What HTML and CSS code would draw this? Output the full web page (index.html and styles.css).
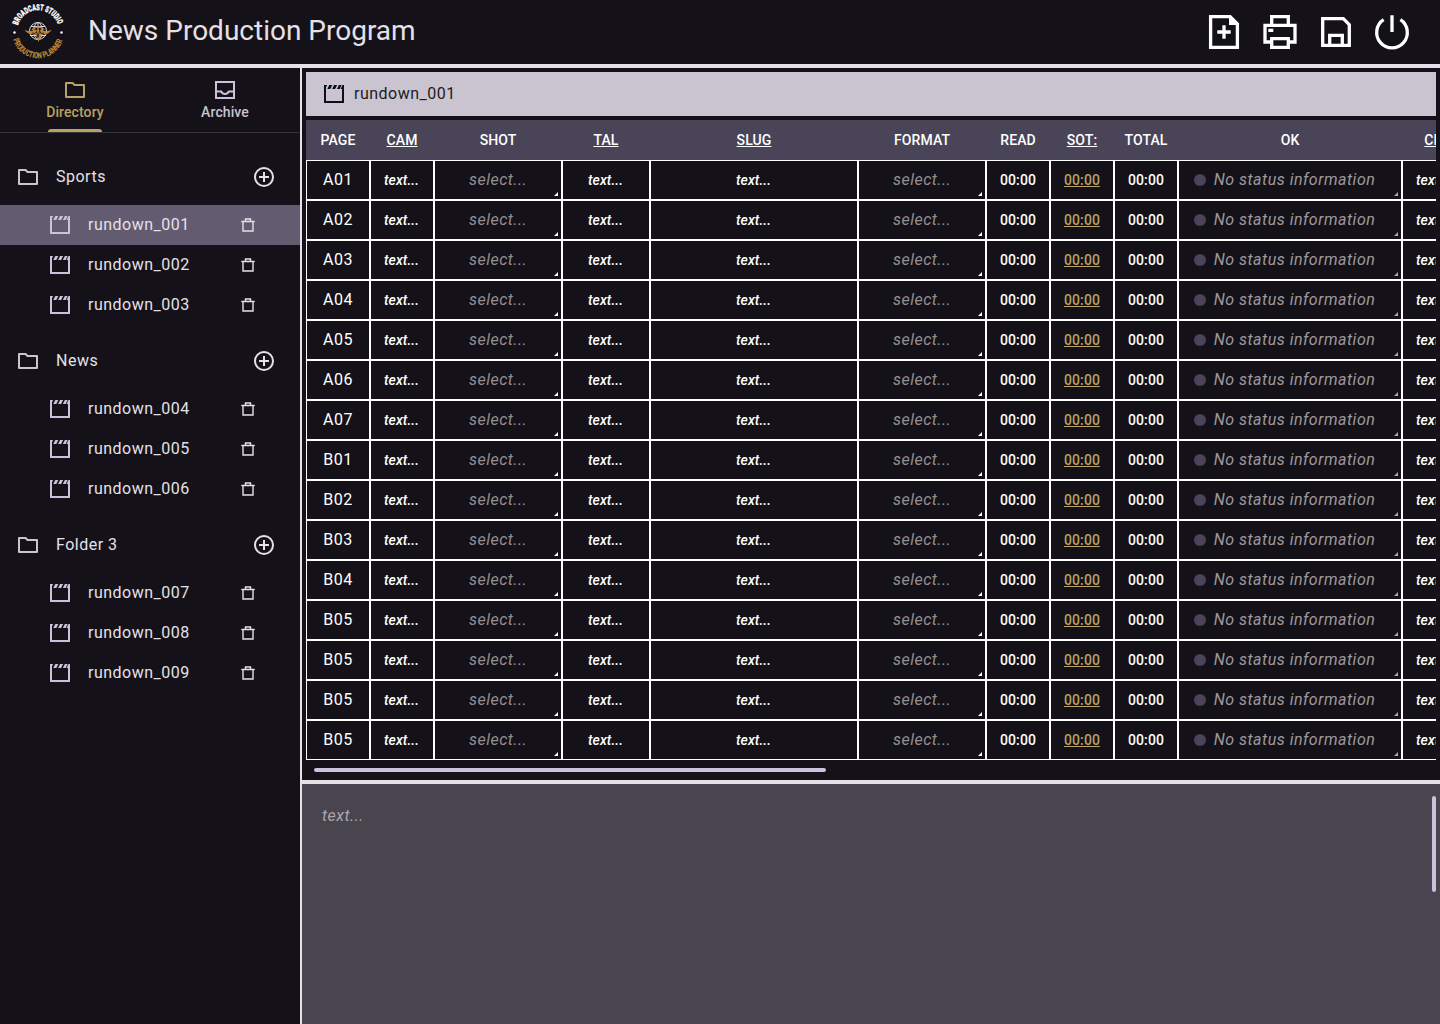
FILE: index.html
```html
<!DOCTYPE html>
<html lang="en">
<head>
<meta charset="utf-8">
<title>News Production Program</title>
<link rel="stylesheet" href="styles.css">
</head>
<body>
<svg class="defs" aria-hidden="true">
  <symbol id="folder" viewBox="0 0 24 24"><path d="M3 19V5h6.6l2 2H21v12z" fill="none" stroke="currentColor" stroke-width="2" stroke-linejoin="round"/></symbol>
  <symbol id="inbox" viewBox="0 0 24 24"><path d="M3 4h18v16H3zM3 13.5h5.2c.8 1.6 2.2 2.5 3.8 2.5s3-.9 3.800-2.500H21" fill="none" stroke="currentColor" stroke-width="2"/></symbol>
  <symbol id="clapper" viewBox="0 0 24 24"><path d="M2 3h3L4 5.500V19h16V7h-1.500L20.500 3H22v18H2zM7.300 3h3L8.300 7h-3zM12.100 3h3l-2 4h-3zM16.900 3h2.700l-2 4h-2.700z" fill="currentColor"/></symbol>
  <symbol id="trash" viewBox="0 0 16 16"><path d="M1.300 4.500h13.400M5.500 4V2h5v2M3 4.500v9.500h10V4.500" fill="none" stroke="currentColor" stroke-width="1.400"/></symbol>
  <symbol id="add" viewBox="0 0 24 24"><path d="M12 3a9 9 0 1 0 0 18a9 9 0 0 0 0-18zM12 7v10M7 12h10" fill="none" stroke="currentColor" stroke-width="2"/></symbol>
</svg>
<header class="topbar">
  <svg class="logo" viewBox="0 0 56 56">
    <path id="arc-top" d="M7.800 21.500A21 21 0 0 1 48.200 21.500" fill="none"/>
    <path id="arc-bottom" d="M3 35.500A26 26 0 0 0 53 35.500" fill="none"/>
    <text class="logo-top"><textPath href="#arc-top" textLength="53" lengthAdjust="spacingAndGlyphs">BROADCAST STUDIO</textPath></text>
    <text class="logo-bottom"><textPath href="#arc-bottom" textLength="66" lengthAdjust="spacingAndGlyphs">PRODUCTION PLANNER</textPath></text>
    <g fill="none" stroke="#d8d6da" stroke-width="1"><circle cx="28" cy="27" r="8.500"/><ellipse cx="28" cy="27" rx="4.300" ry="8.500"/><path d="M28 18.500v17M21 22.500h14M20 31.500h16"/></g>
    <path d="M14.500 26q6 2.500 10-.5l3 1 4-1q4 3 10 .5-3 5-8.500 4l-2 1.500-2.500 6.500-2.500-6.500-2-1.500q-6 1-9.500-4z" fill="#bd8235"/>
    <path d="M22 25.500q6-5 12 0" fill="none" stroke="#bd8235" stroke-width="1.600"/>
    <path d="M22 29l3 .5 1.500-2 1.500 6 1.500-7 1.500 3 3-.5" fill="none" stroke="#141218" stroke-width=".8"/>
    <circle cx="4.500" cy="28.500" r="1.200" fill="#fff"/><circle cx="51.500" cy="28.500" r="1.200" fill="#fff"/>
  </svg>
  <h1>News Production Program</h1>
  <nav class="actions">
    <svg viewBox="0 0 40 40"><path d="M6.600 4.600h19.500l7.300 7.300v23.500H6.600z"/><path class="solid" d="M25 3v10h10z"/><path d="M20 13.300v13.400M13.300 20h13.400"/></svg>
    <svg viewBox="0 0 40 40"><path d="M11.700 13V4.700h16.600V13M11.700 30H5V13.300h30V30h-6.700M11.700 26.700h16.600v8.600H11.700z"/><path class="solid" d="M8.300 16.700h5V20h-5z"/></svg>
    <svg viewBox="0 0 40 40"><path d="M6.700 6.700h20.600l6 6v20.600H6.700z"/><path d="M13.700 33V23.300h12.600V33"/></svg>
    <svg viewBox="0 0 40 40"><path d="M20 3.300V20M11.600 7.700a15.300 15.300 0 1 0 16.800 0"/></svg>
  </nav>
</header>
<div class="workspace">
  <aside class="sidebar">
    <div class="tabs">
      <div class="tab active"><svg class="icon"><use href="#folder"/></svg><span>Directory</span></div>
      <div class="tab"><svg class="icon"><use href="#inbox"/></svg><span>Archive</span></div>
    </div>
    <div class="folders" id="folders"></div>
  </aside>
  <main class="main">
    <section class="rundown">
      <div class="rundown-title"><svg class="icon"><use href="#clapper"/></svg><span>rundown_001</span></div>
      <div class="sheet">
        <div class="row head">
          <span>PAGE</span><u>CAM</u><span>SHOT</span><u>TAL</u><u>SLUG</u><span>FORMAT</span><span>READ</span><u>SOT:</u><span>TOTAL</span><span>OK</span><u>CH</u>
        </div>
        <div id="rows"></div>
      </div>
      <div class="hscroll"></div>
    </section>
    <section class="notes"><p>text...</p><div class="vscroll"></div></section>
  </main>
</div>
<script src="app.js"></script>
</body>
</html>
```
FILE: styles.css
```css
* { box-sizing: border-box; }
body {
  margin: 0;
  height: 1024px;
  display: flex;
  flex-direction: column;
  overflow: hidden;
  background: #141218;
  color: #e6e0e9;
  font: 16px/24px Roboto, sans-serif;
  letter-spacing: .5px;
}
.defs { display: none; }
.icon { width: 24px; height: 24px; display: block; flex: none; }

.topbar {
  flex: none;
  height: 68px;
  display: flex;
  align-items: center;
  padding: 0 28px 0 10px;
  border-bottom: 4px solid #e6e0e9;
}
.logo { width: 56px; height: 56px; flex: none; overflow: visible; }
.logo text { font: 900 8.5px Roboto, sans-serif; letter-spacing: 0; }
.logo .logo-top { fill: #fff; stroke: #fff; stroke-width: .3; }
.logo .logo-bottom { fill: #bd8235; }
h1 { margin: 0 auto 3px 22px; font-size: 28px; line-height: 36px; font-weight: 400; letter-spacing: 0; }
.actions { display: flex; gap: 16px; }
.actions svg { width: 40px; height: 40px; fill: none; stroke: #fff; stroke-width: 3.300; }
.actions .solid { fill: #fff; stroke: none; }

.workspace { flex: 1; display: flex; min-height: 0; }
.sidebar { width: 302px; flex: none; border-right: 2px solid #e6e0e9; }
.tabs { display: flex; height: 65px; border-bottom: 1px solid #36343b; }
.tab {
  flex: 1;
  display: flex;
  flex-direction: column;
  align-items: center;
  padding-top: 10px;
  font-size: 14px;
  line-height: 20px;
  font-weight: 500;
  letter-spacing: .1px;
  color: #cac4d0;
}
.tab:not(.active) .icon { color: #ccc2dc; }
.tab.active { color: #b7a163; }
.tab.active::after { content: ""; width: 54px; height: 3px; margin-top: 7px; border-radius: 3px 3px 0 0; background: #b7a163; }
.folders { padding-top: 16px; }
.folder { margin-bottom: 8px; }
.folder-head { display: flex; align-items: center; gap: 16px; height: 56px; padding: 0 24px 0 16px; }
.folder-head .name { flex: 1; }
.folder-head .icon:first-child { color: #cac4d0; }
.item { display: flex; align-items: center; gap: 16px; height: 40px; padding: 0 44px 0 48px; }
.item .name { flex: 1; }
.item .icon { color: #ccc2dc; }
.item .trash { width: 16px; height: 16px; color: #e6e0e9; }
.item.selected { background: #635b70; }

.main { flex: 1; min-width: 0; display: flex; flex-direction: column; }
.rundown { height: 716px; flex: none; padding: 4px 4px 0; border-bottom: 4px solid #e6e0e9; }
.rundown-title {
  display: flex;
  align-items: center;
  gap: 8px;
  height: 44px;
  padding-left: 16px;
  margin-bottom: 4px;
  background: #cac4d0;
  color: #1d1b20;
}
.rundown-title .icon { color: #07101b; }
.sheet { overflow: hidden; }
.row { display: grid; width: 1160px; grid-template-columns: 64px 64px 128px 88px 208px 128px 64px 64px 64px 224px 64px; height: 40px; }
.row > * { display: flex; align-items: center; justify-content: center; white-space: nowrap; }
.row.head { background: #4a4458; }
.head > *, .strong, .time { font-size: 14px; line-height: 20px; font-weight: 500; letter-spacing: .1px; color: #fff; }
.head u, .time.link { text-underline-offset: 1px; text-decoration-thickness: 1px; }
.cell { position: relative; border: 1px solid #fff; color: #fff; }
.strong { font-style: italic; padding-right: 1px; }
.choice { font-style: italic; color: #938f94; }
.choice::after { content: ""; position: absolute; right: 3px; bottom: 3px; border: 2px solid transparent; border-right-color: #fff; border-bottom-color: #fff; }
.time.link { color: #b7a163; text-decoration-line: underline; }
.status { gap: 8px; padding-right: 11px; color: #9c999d; }
.status::before { content: ""; width: 12px; height: 12px; border-radius: 50%; background: #4a4458; }
.status::after { opacity: .65; }
.hscroll { width: 512px; height: 4px; margin: 8px 0 0 8px; border-radius: 2px; background: #ccc2dc; }

.notes { flex: 1; display: flex; justify-content: space-between; padding: 12px 4px 0 20px; background: #49454f; }
.notes p { margin: 8px 0 0; font-style: italic; color: #aaa6ae; }
.vscroll { width: 4px; height: 96px; border-radius: 2px; background: #ccc2dc; }
```
FILE: app.js
```js
const folders = [
  ["Sports", ["001", "002", "003"]],
  ["News", ["004", "005", "006"]],
  ["Folder 3", ["007", "008", "009"]],
];
const icon = (id, cls = "icon") => `<svg class="${cls}"><use href="#${id}"/></svg>`;

document.getElementById("folders").innerHTML = folders.map(([name, items]) => `
  <div class="folder">
    <div class="folder-head">${icon("folder")}<span class="name">${name}</span>${icon("add")}</div>
    ${items.map(n => `<div class="item${n === "001" ? " selected" : ""}">${icon("clapper")}<span class="name">rundown_${n}</span>${icon("trash", "trash")}</div>`).join("")}
  </div>`).join("");

const pages = ["A01", "A02", "A03", "A04", "A05", "A06", "A07", "B01", "B02", "B03", "B04", "B05", "B05", "B05", "B05"];
const text = '<div class="cell strong">text...</div>';
const select = '<div class="cell choice">select...</div>';
const time = '<div class="cell time">00:00</div>';

document.getElementById("rows").innerHTML = pages.map(page => `
  <div class="row">
    <div class="cell page">${page}</div>${text}${select}${text}${text}${select}
    ${time}<div class="cell time link">00:00</div>${time}
    <div class="cell choice status">No status information</div>${text}
  </div>`).join("");
```
